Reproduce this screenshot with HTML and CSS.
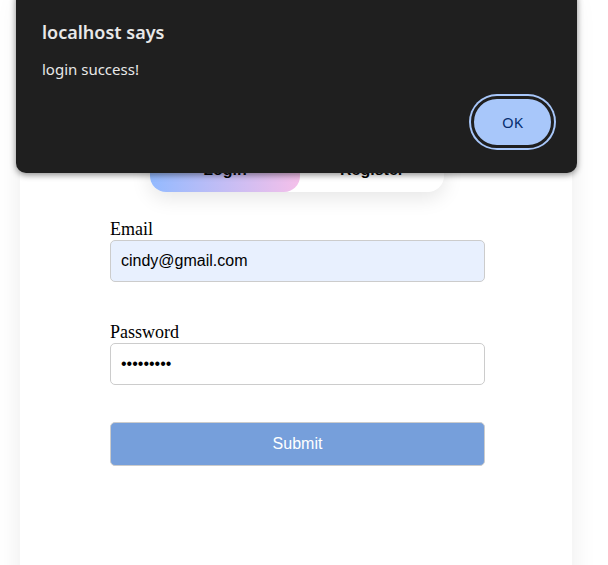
FILE: index.html
```html
<!DOCTYPE html>
<html>
<head>
<meta charset="utf-8">
<link rel="stylesheet" href="styles.css">
</head>
<body>
<div class="card">
  <div class="tabs">
    <button class="tab active">Login</button>
    <button class="tab">Register</button>
  </div>
  <form class="form">
    <div class="field">
      <label class="label">Email</label>
      <input class="input autofill" type="text" value="cindy@gmail.com">
    </div>
    <div class="field">
      <label class="label">Password</label>
      <input class="input" type="password" value="123456789">
    </div>
    <button type="button" class="submit">Submit</button>
  </form>
</div>
<div class="dialog">
  <div class="dialog-title">localhost says</div>
  <div class="dialog-msg">login success!</div>
  <div class="dialog-actions">
    <button class="ok">OK</button>
  </div>
</div>
</body>
</html>
```
FILE: styles.css
```css
html, body {
  margin: 0;
  padding: 0;
  background: #ffffff;
  height: 100%;
  overflow: hidden;
}
body {
  font-family: "Liberation Serif", serif;
}
.card {
  margin-left: 20px;
  width: 552px;
  height: 620px;
  background: #ffffff;
  box-shadow: 0 0 24px rgba(0,0,0,0.08);
  padding-top: 147px;
  box-sizing: border-box;
  display: flex;
  flex-direction: column;
  align-items: center;
}
.tabs {
  display: flex;
  width: 294px;
  height: 45px;
  border-radius: 16px;
  background: #fff;
  box-shadow: 0 6px 20px rgba(0,0,0,0.1);
  margin-left: 2px;
}
.tab {
  flex: 0 0 150px;
  border: none;
  background: transparent;
  border-radius: 16px;
  font-family: "Liberation Sans", Arial, sans-serif;
  font-weight: bold;
  font-size: 16px;
  color: #000;
}
.tab + .tab { flex: 1; }
.tab.active {
  background: linear-gradient(90deg, #93baff 0%, #f5c0ea 100%);
}
.form {
  width: 375px;
  margin-left: 3px;
  margin-top: 27px;
  display: flex;
  flex-direction: column;
}
.field {
  display: flex;
  flex-direction: column;
  margin-bottom: 40px;
}
.field + .field { margin-bottom: 37px; }
.label {
  font-family: "Liberation Serif", serif;
  font-size: 18px;
  line-height: 21px;
  color: #000;
}
.input {
  box-sizing: border-box;
  height: 42px;
  width: 375px;
  border: 1px solid #cccccc;
  border-radius: 5px;
  padding: 0 10px;
  font-family: "Liberation Sans", Arial, sans-serif;
  font-size: 16px;
  color: #000;
  background: #fff;
  margin: 0;
}
.input.autofill { background: #e8f0fe; }
.submit {
  box-sizing: border-box;
  height: 44px;
  width: 375px;
  border: 1px solid #cccccc;
  border-radius: 5px;
  background: #769fdb;
  color: #fff;
  font-family: "Liberation Sans", Arial, sans-serif;
  font-size: 16px;
}
.dialog {
  position: absolute;
  left: 16px;
  top: -12px;
  width: 561px;
  height: 185px;
  box-sizing: border-box;
  background: #1f1f1f;
  border-radius: 10px;
  box-shadow: 0 2px 6px rgba(0,0,0,0.45), 0 0 0 1px rgba(255,255,255,0.06);
  padding: 32px 21px 0 26px;
  font-family: "Noto Sans", "Open Sans", sans-serif;
  color: #e8e8e8;
  display: flex;
  flex-direction: column;
}
.dialog-title {
  font-size: 18px;
  font-weight: 600;
  line-height: 24px;
}
.dialog-msg {
  font-size: 15px;
  line-height: 20px;
  margin-top: 15px;
}
.dialog-actions {
  display: flex;
  justify-content: flex-end;
  margin-top: 17px;
}
.ok {
  box-sizing: border-box;
  width: 83px;
  height: 52px;
  border-radius: 26px;
  background: #a8c7fa;
  border: 3px solid #1f1f1f;
  box-shadow: 0 0 0 2px #a8c7fa;
  color: #062e6f;
  font-family: "Noto Sans", "Open Sans", sans-serif;
  font-size: 15px;
  margin-right: 2px;
}
```
